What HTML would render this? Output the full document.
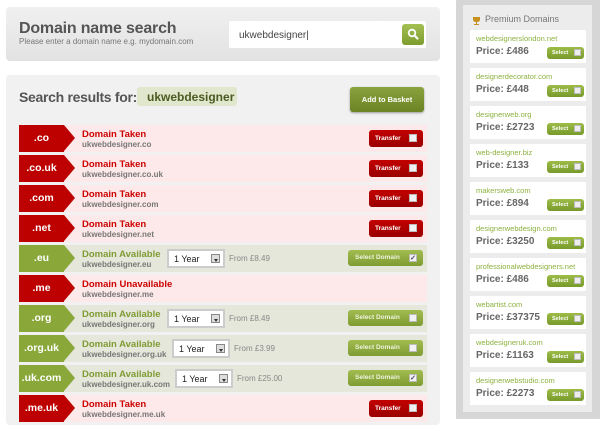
<!DOCTYPE html>
<html><head><meta charset="utf-8"><style>
*{margin:0;padding:0;box-sizing:border-box}
body{width:600px;height:421px;background:#fff;font-family:"Liberation Sans",Arial,sans-serif;position:relative;overflow:hidden}
.abs{position:absolute}
.p1{left:6px;top:7px;width:434px;height:54px;background:linear-gradient(#f0f0f0,#e2e2e2);border-radius:4px}
.p2{left:6px;top:75px;width:434px;height:350px;background:#f1f1f1;border-radius:4px}
h1{position:absolute;left:19px;top:20px;font-size:16px;color:#555;font-weight:bold;letter-spacing:-0.2px}
.sub{left:19px;top:37px;font-size:8px;color:#777}
.inp{left:229px;top:21px;width:197px;height:27px;background:#fff;border-radius:2px;font-size:10px;color:#444;padding:9px 0 0 10px}
.sb{left:402px;top:24px;width:22px;height:21px;border-radius:3px;background:linear-gradient(#a4c054,#7d9c2e)}
.h2{left:19px;top:89px;font-size:14px;font-weight:bold;color:#555;letter-spacing:-0.3px}
.kw{left:137px;top:87px;width:100px;height:19px;background:#e0e7cc;border-radius:3px;color:#4d5a22;font-weight:bold;font-size:12px;padding:3px 0 0 10px}
.atb{left:350px;top:87px;width:74px;height:25px;border-radius:3px;background:linear-gradient(#8aa33e,#6b8324);color:#fff;font-size:7.5px;font-weight:bold;text-align:center;line-height:25px;box-shadow:0 1px 2px #999}
.row{position:absolute;left:19px;width:408px;height:27px}
.t{background:#fde9e9}.a{background:#e4e7da}
.tag{position:absolute;left:0;top:0;width:45px;height:27px;color:#fff;font-weight:bold;font-size:10.5px;text-align:center;line-height:27px}
.tag:after{content:"";position:absolute;left:45px;top:0;border-left:11px solid;border-top:13.5px solid transparent;border-bottom:13.5px solid transparent}
.t .tag{background:#bd0000}.t .tag:after{border-left-color:#bd0000}
.a .tag{background:#8aa83a}.a .tag:after{border-left-color:#8aa83a}
.st{position:absolute;left:63px;top:4px;font-size:9.5px;font-weight:bold}
.t .st{color:#cc0000}.a .st{color:#7f9b34}
.dn{position:absolute;left:63px;top:15px;font-size:8px;font-weight:bold;color:#777}
.tr{position:absolute;left:350px;top:5px;width:54px;height:17px;border-radius:3px;background:linear-gradient(#c20000,#9a0000);color:#fff;font-size:6.5px;font-weight:bold;line-height:17px;padding-left:6px}
.sd{position:absolute;left:329px;top:5px;width:75px;height:16px;border-radius:3px;background:linear-gradient(#a1bc4f,#7f9c33);color:#eef3dc;font-size:6.5px;font-weight:bold;line-height:16px;padding-left:7px}
.cb{position:absolute;right:6px;top:4px;width:8px;height:8px;background:#f2f2f2;border:1px solid #bbb;font-size:7px;line-height:7px;color:#446;text-align:center}
.sel{position:absolute;top:4px;width:58px;height:19px;background:#fff;border:2px solid #ccc;font-size:9px;color:#222;padding:3px 0 0 5px}
.sel i{position:absolute;right:3px;top:3px;width:9px;height:9px;border:1px solid #888;background:#ddd}
.sel i:after{content:"";position:absolute;left:2px;top:4px;border-top:3px solid #333;border-left:2px solid transparent;border-right:2px solid transparent}
.fr{position:absolute;top:9px;font-size:8px;color:#888}
.side{left:456px;top:0;width:144px;height:419px;background:#d6d6d6}
.sin{left:463px;top:5px;width:129px;height:407px;background:#ececec}
.ph{left:472px;top:14px;font-size:9px;color:#777}
.card{position:absolute;left:470px;width:116px;height:33px;background:#fff}
.card .n{position:absolute;left:6px;top:4px;font-size:7.5px;color:#8db23f}
.card .p{position:absolute;left:6px;top:16px;font-size:10px;font-weight:bold;color:#666}
.card .b{position:absolute;left:77px;top:17px;width:37px;height:12px;border-radius:3px;background:linear-gradient(#9dbb47,#779a2b);color:#fff;font-size:5.5px;font-weight:bold;line-height:12px;padding-left:5px}
.card .b i{position:absolute;right:3px;top:2px;width:7px;height:7px;background:#eee;border:1px solid #bbb}
</style></head><body>
<div class="abs p1"></div>
<h1>Domain name search</h1>
<div class="abs sub">Please enter a domain name e.g. mydomain.com</div>
<div class="abs inp">ukwebdesigner|</div>
<div class="abs sb"><svg width="22" height="21"><circle cx="10" cy="9" r="3.3" fill="none" stroke="#fff" stroke-width="1.8"/><path d="M12.5 11.5 L15.5 14.5" stroke="#fff" stroke-width="2.2" stroke-linecap="round"/></svg></div>
<div class="abs p2"></div>
<div class="abs h2">Search results for:</div>
<div class="abs kw">ukwebdesigner</div>
<div class="abs atb">Add to Basket</div>

<div class="row t" style="top:125px"><div class="tag">.co</div><div class="st">Domain Taken</div><div class="dn">ukwebdesigner.co</div><div class="tr">Transfer<span class="cb"></span></div></div>
<div class="row t" style="top:155px"><div class="tag">.co.uk</div><div class="st">Domain Taken</div><div class="dn">ukwebdesigner.co.uk</div><div class="tr">Transfer<span class="cb"></span></div></div>
<div class="row t" style="top:185px"><div class="tag">.com</div><div class="st">Domain Taken</div><div class="dn">ukwebdesigner.com</div><div class="tr">Transfer<span class="cb"></span></div></div>
<div class="row t" style="top:215px"><div class="tag">.net</div><div class="st">Domain Taken</div><div class="dn">ukwebdesigner.net</div><div class="tr">Transfer<span class="cb"></span></div></div>
<div class="row a" style="top:245px"><div class="tag">.eu</div><div class="st">Domain Available</div><div class="dn">ukwebdesigner.eu</div><div class="sel" style="left:148px">1 Year<i></i></div><div class="fr" style="left:210px">From £8.49</div><div class="sd">Select Domain<span class="cb">✓</span></div></div>
<div class="row t" style="top:275px"><div class="tag">.me</div><div class="st">Domain Unavailable</div><div class="dn">ukwebdesigner.me</div></div>
<div class="row a" style="top:305px"><div class="tag">.org</div><div class="st">Domain Available</div><div class="dn">ukwebdesigner.org</div><div class="sel" style="left:148px">1 Year<i></i></div><div class="fr" style="left:210px">From £8.49</div><div class="sd">Select Domain<span class="cb"></span></div></div>
<div class="row a" style="top:335px"><div class="tag">.org.uk</div><div class="st">Domain Available</div><div class="dn">ukwebdesigner.org.uk</div><div class="sel" style="left:153px">1 Year<i></i></div><div class="fr" style="left:215px">From £3.99</div><div class="sd">Select Domain<span class="cb"></span></div></div>
<div class="row a" style="top:365px"><div class="tag">.uk.com</div><div class="st">Domain Available</div><div class="dn">ukwebdesigner.uk.com</div><div class="sel" style="left:156px">1 Year<i></i></div><div class="fr" style="left:218px">From £25.00</div><div class="sd">Select Domain<span class="cb">✓</span></div></div>
<div class="row t" style="top:395px"><div class="tag">.me.uk</div><div class="st">Domain Taken</div><div class="dn">ukwebdesigner.me.uk</div><div class="tr">Transfer<span class="cb"></span></div></div>

<div class="abs side"></div>
<div class="abs sin"></div>
<div class="abs" style="left:472px;top:13px;width:9px;height:10px"><svg width="9" height="10"><path d="M1 1H8V3Q8 6 5 6V8H7V9H2V8H4V6Q1 6 1 3Z" fill="#c8901e"/></svg></div>
<div class="abs ph" style="left:485px">Premium Domains</div>

<div class="card" style="top:30px"><div class="n">webdesignerslondon.net</div><div class="p">Price: £486</div><div class="b">Select<i></i></div></div>
<div class="card" style="top:68px"><div class="n">designerdecorator.com</div><div class="p">Price: £448</div><div class="b">Select<i></i></div></div>
<div class="card" style="top:106px"><div class="n">designerweb.org</div><div class="p">Price: £2723</div><div class="b">Select<i></i></div></div>
<div class="card" style="top:144px"><div class="n">web-designer.biz</div><div class="p">Price: £133</div><div class="b">Select<i></i></div></div>
<div class="card" style="top:182px"><div class="n">makersweb.com</div><div class="p">Price: £894</div><div class="b">Select<i></i></div></div>
<div class="card" style="top:220px"><div class="n">designerwebdesign.com</div><div class="p">Price: £3250</div><div class="b">Select<i></i></div></div>
<div class="card" style="top:258px"><div class="n">professionalwebdesigners.net</div><div class="p">Price: £486</div><div class="b">Select<i></i></div></div>
<div class="card" style="top:296px"><div class="n">webartist.com</div><div class="p">Price: £37375</div><div class="b">Select<i></i></div></div>
<div class="card" style="top:334px"><div class="n">webdesigneruk.com</div><div class="p">Price: £1163</div><div class="b">Select<i></i></div></div>
<div class="card" style="top:372px"><div class="n">designerwebstudio.com</div><div class="p">Price: £2273</div><div class="b">Select<i></i></div></div>
</body></html>
